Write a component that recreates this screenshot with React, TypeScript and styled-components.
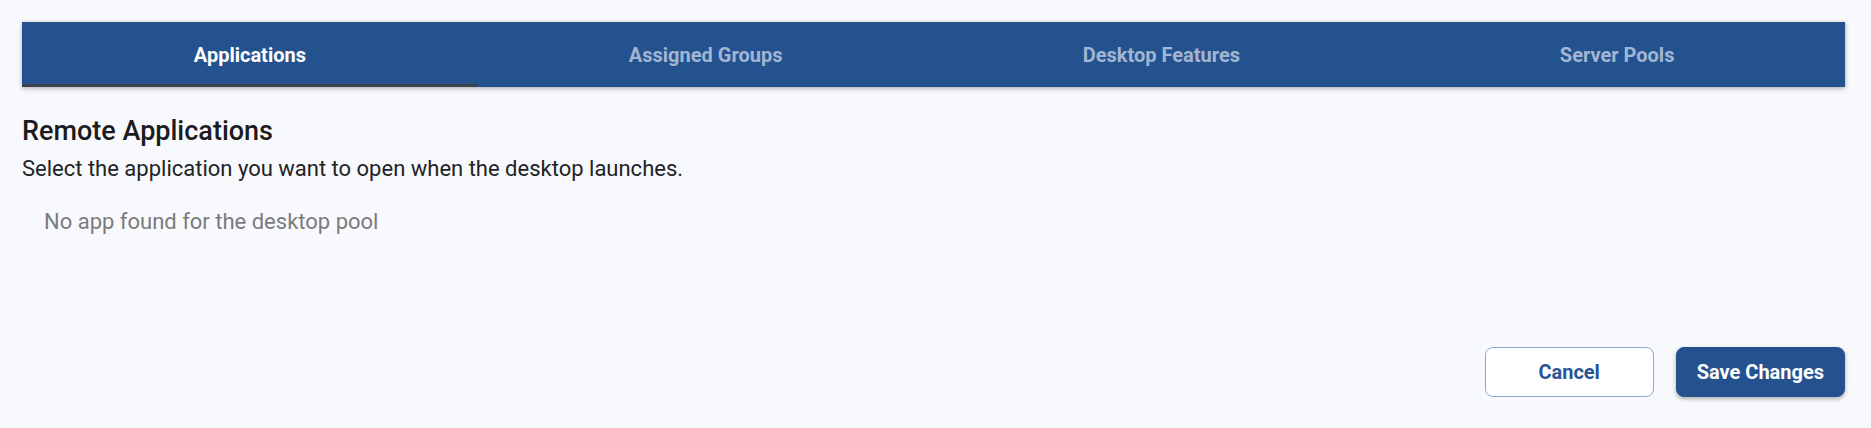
import React, { useState } from 'react';
import styled, { createGlobalStyle } from 'styled-components';

const GlobalStyle = createGlobalStyle`
    html, body {
        margin: 0;
        padding: 0;
        background-color: #f8f9fc;
    }
    body {
        font-family: Roboto, "Liberation Sans", sans-serif;
    }
`;

const Page = styled.div`
    display: flex;
    flex-direction: column;
    height: 100vh;
    box-sizing: border-box;
    padding: 22px 26px 31px 22px;
    background-color: #f8f9fc;
`;

const TabBar = styled.div`
    display: flex;
    height: 65px;
    background-color: #23528f;
    box-shadow: 0 2px 5px rgba(0, 0, 0, 0.22), 1px 0 3px rgba(0, 0, 0, 0.12);
`;

const Tab = styled.button<{ $active?: boolean }>`
    flex: 1;
    display: flex;
    align-items: center;
    justify-content: center;
    padding: 3px 0 0;
    border: none;
    border-bottom: 3px solid ${p => (p.$active ? '#3a424e' : 'transparent')};
    background: transparent;
    color: ${p => (p.$active ? '#ffffff' : '#a2b5d2')};
    font-family: Roboto, "Liberation Sans", sans-serif;
    font-size: 20px;
    font-weight: 700;
    cursor: pointer;
`;

const Heading = styled.h2`
    margin: 28px 0 0;
    font-size: 27px;
    line-height: 32px;
    font-weight: 500;
    color: #1c1c1e;
`;

const Description = styled.p`
    margin: 9px 0 0;
    font-size: 22px;
    line-height: 26px;
    color: #222326;
`;

const EmptyText = styled.div`
    margin-top: 26px;
    padding-left: 22px;
    font-size: 22px;
    line-height: 28px;
    color: #7b7b7d;
`;

const Footer = styled.div`
    display: flex;
    justify-content: flex-end;
    gap: 22px;
    margin-top: auto;
`;

const Button = styled.button<{ $primary?: boolean }>`
    height: 50px;
    min-width: 169px;
    padding: 0 20px;
    border-radius: 8px;
    font-family: Roboto, "Liberation Sans", sans-serif;
    font-size: 20px;
    font-weight: 700;
    cursor: pointer;
    border: 1px solid ${p => (p.$primary ? '#23528f' : '#8ca8cf')};
    background-color: ${p => (p.$primary ? '#23528f' : '#ffffff')};
    color: ${p => (p.$primary ? '#ffffff' : '#2a5595')};
    box-shadow: ${p => (p.$primary ? '0 2px 4px rgba(0, 0, 0, 0.3)' : 'none')};
`;

const tabs = ['Applications', 'Assigned Groups', 'Desktop Features', 'Server Pools'];

function App() {
    const [activeTab, setActiveTab] = useState(0);

    return (
        <>
            <GlobalStyle />
            <Page>
                <TabBar>
                    {tabs.map((t, i) => (
                        <Tab key={t} $active={i === activeTab} onClick={() => setActiveTab(i)}>
                            {t}
                        </Tab>
                    ))}
                </TabBar>
                <Heading>Remote Applications</Heading>
                <Description>Select the application you want to open when the desktop launches.</Description>
                <EmptyText>No app found for the desktop pool</EmptyText>
                <Footer>
                    <Button>Cancel</Button>
                    <Button $primary>Save Changes</Button>
                </Footer>
            </Page>
        </>
    );
}

export default App;
